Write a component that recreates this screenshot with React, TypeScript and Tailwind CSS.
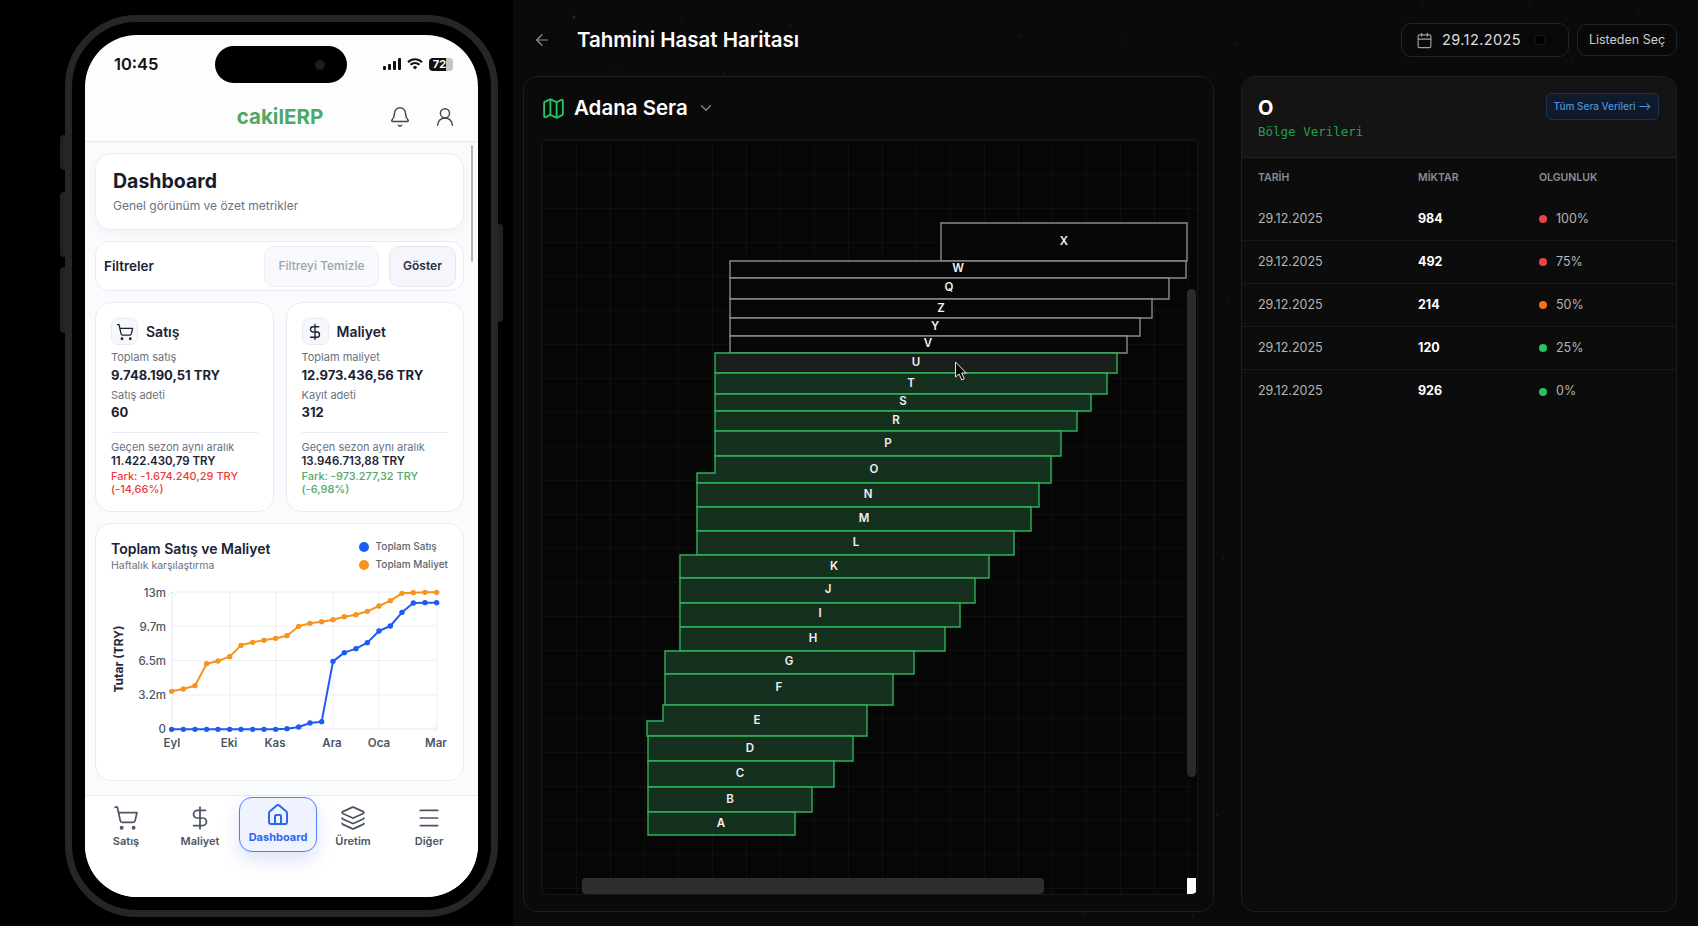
import { ArrowLeft, Bell, Calendar, ChevronDown, DollarSign, House, Layers, Map as MapIcon, Menu, ShoppingCart, UserRound } from "lucide-react";

// harvest zones, drawn top to bottom so the lower ones overlap the upper borders
type Zone = { id: string; pts: string; lx: number; ly: number; kind: "idle" | "hover" | "green" };

const box = (l: number, t: number, r: number, b: number) => `${l},${t} ${r},${t} ${r},${b} ${l},${b}`;

const ZONES: Zone[] = [
	{ id: "X", pts: box(941, 223, 1187, 261), lx: 1064, ly: 241, kind: "idle" },
	{ id: "W", pts: box(730, 261, 1186, 278), lx: 958, ly: 268, kind: "idle" },
	{ id: "Q", pts: box(730, 278, 1169, 299), lx: 949, ly: 287, kind: "idle" },
	{ id: "Z", pts: box(730, 299, 1152, 318), lx: 941, ly: 308, kind: "idle" },
	{ id: "Y", pts: box(730, 318, 1140, 336), lx: 935, ly: 326, kind: "idle" },
	{ id: "V", pts: box(730, 336, 1127, 353), lx: 928, ly: 343, kind: "idle" },
	{ id: "U", pts: box(715, 353, 1117, 373), lx: 916, ly: 362, kind: "hover" },
	{ id: "T", pts: box(715, 373, 1107, 394), lx: 911, ly: 383, kind: "green" },
	{ id: "S", pts: box(715, 394, 1091, 411), lx: 903, ly: 401, kind: "green" },
	{ id: "R", pts: box(715, 411, 1077, 431), lx: 896, ly: 420, kind: "green" },
	{ id: "P", pts: box(715, 431, 1061, 456), lx: 888, ly: 443, kind: "green" },
	{ id: "O", pts: "715,456 1051,456 1051,483 697,483 697,473 715,473", lx: 874, ly: 469, kind: "green" },
	{ id: "N", pts: box(697, 483, 1039, 507), lx: 868, ly: 494, kind: "green" },
	{ id: "M", pts: box(697, 507, 1031, 531), lx: 864, ly: 518, kind: "green" },
	{ id: "L", pts: box(697, 531, 1014, 555), lx: 856, ly: 542, kind: "green" },
	{ id: "K", pts: box(680, 555, 989, 578), lx: 834, ly: 566, kind: "green" },
	{ id: "J", pts: box(680, 578, 975, 603), lx: 828, ly: 589, kind: "green" },
	{ id: "I", pts: box(680, 603, 960, 627), lx: 820, ly: 613, kind: "green" },
	{ id: "H", pts: box(680, 627, 945, 651), lx: 813, ly: 638, kind: "green" },
	{ id: "G", pts: box(665, 651, 914, 674), lx: 789, ly: 661, kind: "green" },
	{ id: "F", pts: box(665, 674, 893, 705), lx: 779, ly: 687, kind: "green" },
	{ id: "E", pts: "663,705 867,705 867,736 647,736 647,721 663,721", lx: 757, ly: 720, kind: "green" },
	{ id: "D", pts: box(648, 736, 853, 761), lx: 750, ly: 748, kind: "green" },
	{ id: "C", pts: box(648, 761, 834, 787), lx: 740, ly: 773, kind: "green" },
	{ id: "B", pts: box(648, 787, 812, 812), lx: 730, ly: 799, kind: "green" },
	{ id: "A", pts: box(648, 812, 795, 835), lx: 721, ly: 823, kind: "green" },
];

const ROWS = [
	{ qty: "984", pct: "100%", dot: "bg-[#ef4444]" },
	{ qty: "492", pct: "75%", dot: "bg-[#ef4444]" },
	{ qty: "214", pct: "50%", dot: "bg-[#f97316]" },
	{ qty: "120", pct: "25%", dot: "bg-[#22c55e]" },
	{ qty: "926", pct: "0%", dot: "bg-[#22c55e]" },
];

const CHART_X = [275, 310, 345, 380, 414, 449, 483, 518, 552, 587, 621, 656, 690, 725, 759, 793, 828, 862, 897, 931, 966, 1000, 1035, 1070];
const COST_Y = [514, 507, 497, 431, 423, 410, 376, 367, 361, 355, 347, 319, 310, 305, 299, 290, 284, 274, 258, 242, 220, 218, 217, 217];
const SALES_Y = [628, 628, 628, 628, 628, 628, 628, 628, 628, 628, 626, 621, 609, 605, 424, 398, 386, 368, 333, 318, 277, 249, 248, 248];

const px = (v: number) => 80 + v / 3;
const py = (v: number) => 520 + v / 3;

// faint dust in the page background
const STARS = Array.from({ length: 150 }, (_, i) => ({
	x: (i * 397 + 61) % 1185,
	y: (i * 223 + 17) % 926,
	r: i % 11 === 0 ? 1.6 : 0.8,
}));

const Series = ({ ys, color }: { ys: number[]; color: string }) => (
	<>
		<polyline
			points={ys.map((y, i) => `${px(CHART_X[i])},${py(y)}`).join(" ")}
			fill="none"
			stroke={color}
			strokeWidth="2"
			strokeLinejoin="round"
		/>
		{ys.map((y, i) => (
			<circle key={i} cx={px(CHART_X[i])} cy={py(y)} r="2.7" fill={color} />
		))}
	</>
);

const Chart = () => (
	<svg width="367" height="190" viewBox="96 580 367 190" className="block">
		{[592, 626, 660.5, 695].map((y) => (
			<line key={y} x1="172" x2="437" y1={y} y2={y} stroke="#eceff8" strokeWidth="1" />
		))}
		{[230, 276, 333, 379, 437].map((x) => (
			<line key={x} x1={x} x2={x} y1="592" y2="729" stroke="#eceff8" strokeWidth="1" />
		))}
		<path d="M172 592V729H437M168 596l4-4 4 4M433 725l4 4-4 4" fill="none" stroke="#e4e8f4" strokeWidth="1" />
		<Series ys={COST_Y} color="#f7931e" />
		<Series ys={SALES_Y} color="#1d5bf5" />
		<g fontFamily="Inter, sans-serif" fontSize="11.5" fontWeight="500" fill="#4b5563">
			{[
				["13m", 597],
				["9.7m", 631],
				["6.5m", 665],
				["3.2m", 699],
				["0", 733],
			].map(([t, y]) => (
				<text key={t} x="166" y={y} textAnchor="end">
					{t}
				</text>
			))}
			{[
				["Eyl", 172],
				["Eki", 229],
				["Kas", 275],
				["Ara", 332],
				["Oca", 379],
				["Mar", 436],
			].map(([t, x]) => (
				<text key={t} x={x} y="747" textAnchor="middle" fontWeight="600">
					{t}
				</text>
			))}
		</g>
		<text
			x="120"
			y="659"
			transform="rotate(-90 120 659)"
			textAnchor="middle"
			dominantBaseline="middle"
			fontFamily="Inter, sans-serif"
			fontSize="12"
			fontWeight="700"
			fill="#1f2937"
		>
			Tutar (TRY)
		</text>
	</svg>
);

const StatCard = ({ icon, title, l1, v1, l2, v2, prev, diff, diffColor }: any) => (
	<div className="h-[210px] flex-1 rounded-[16px] border border-[#e9ebf3] bg-white pl-[15px] pt-[15px]">
		<div className="flex items-center gap-[8px]">
			<div className="flex h-[27px] w-[27px] items-center justify-center rounded-[7px] border border-[#e8ebf3] bg-[#f7f8fc] text-[#1b2233]">
				{icon}
			</div>
			<span className="text-[14px] font-semibold leading-[27px] text-[#1b2233]">{title}</span>
		</div>
		<p className="mt-[5px] text-[11px] leading-[14px] text-[#6b7280]">{l1}</p>
		<p className="mt-[2px] text-[13px] font-bold leading-[18px] text-[#1b2233]">{v1}</p>
		<p className="mt-[4px] text-[11px] leading-[14px] text-[#6b7280]">{l2}</p>
		<p className="mt-[1px] text-[13px] font-bold leading-[18px] text-[#1b2233]">{v2}</p>
		<div className="mr-[15px] mt-[11px] h-px bg-[#e8ebf3]" />
		<p className="mt-[7px] text-[11px] leading-[14px] text-[#6b7280]">Geçen sezon aynı aralık</p>
		<p className="text-[11.5px] font-semibold leading-[15px] text-[#1b2233]">{prev}</p>
		<p className={`mt-[1px] pr-[10px] text-[11px] font-medium leading-[13px] ${diffColor}`}>{diff}</p>
	</div>
);

const NavItem = ({ icon, label, className }: any) => (
	<div className={`flex w-[70px] flex-col items-center text-[#4b5563] ${className ?? ""}`}>
		{icon}
		<span className="mt-[3px] text-[11px] font-semibold leading-[14px]">{label}</span>
	</div>
);

const Phone = () => (
	<div className="relative ml-[65px] h-[902px] w-[433px] rounded-[72px] border-[7px] border-[#262626] bg-black p-[13px]">
		<div className="absolute left-[-12px] top-[113px] h-[35px] w-[5px] rounded-l bg-[#222222]" />
		<div className="absolute left-[-12px] top-[170px] h-[65px] w-[5px] rounded-l bg-[#222222]" />
		<div className="absolute left-[-12px] top-[245px] h-[66px] w-[5px] rounded-l bg-[#222222]" />
		<div className="absolute right-[-12px] top-[202px] h-[98px] w-[5px] rounded-r bg-[#222222]" />

		<div className="relative flex h-full flex-col overflow-hidden rounded-[52px] bg-[#fdfdfe]">
			<div className="absolute left-[130px] top-[11px] flex h-[37px] w-[132px] items-center justify-end rounded-full bg-black pr-[22px]">
				<div className="h-[10px] w-[10px] rounded-full bg-[#1c1c1e]" />
			</div>

			<div className="flex h-[58px] shrink-0 items-center justify-between pl-[29px] pr-[25px]">
				<span className="text-[16.5px] font-semibold text-[#111111]">10:45</span>
				<div className="flex items-center gap-[6px]">
					<svg width="18" height="12" viewBox="0 0 18 12" fill="#111111">
						<rect x="0" y="8" width="3" height="4" rx="1" />
						<rect x="5" y="6" width="3" height="6" rx="1" />
						<rect x="10" y="3" width="3" height="9" rx="1" />
						<rect x="15" y="0" width="3" height="12" rx="1" />
					</svg>
					<svg width="16" height="12" viewBox="0 0 16 12" fill="none" stroke="#111111" strokeWidth="2">
						<path d="M1 4.2a10 10 0 0 1 14 0M3.5 6.8a6.4 6.4 0 0 1 9 0" />
						<path d="M8 11.6 5.8 9.2a3 3 0 0 1 4.4 0z" fill="#111111" stroke="none" />
					</svg>
					<div className="flex h-[13px] w-[24px] items-center justify-center rounded-[4px] bg-[linear-gradient(90deg,#111111_72%,#c4c4c4_72%)] pr-[3px] text-[11px] font-bold leading-none text-white">
						72
					</div>
				</div>
			</div>

			<div className="grid h-[49px] shrink-0 grid-cols-[1fr_auto_1fr] items-center border-b border-[#e6e8f2]">
				<div />
				<span className="mr-[3px] text-[20.5px] font-bold text-[#4ea866]">cakilERP</span>
				<div className="flex justify-end gap-[23px] pr-[22px] text-[#3f4654]">
					<Bell size={22} strokeWidth={1.6} />
					<UserRound size={22} strokeWidth={1.6} />
				</div>
			</div>

			<div className="relative flex h-[653px] shrink-0 flex-col gap-[11px] bg-[#fafbfd] pl-[10px] pr-[14px] pt-[11px]">
				<div className="absolute right-[5px] top-[3px] h-[117px] w-[2px] rounded-full bg-[#b5b5b8]" />
				<div className="h-[77px] rounded-[16px] border border-[#e9ebf3] bg-white pl-[17px] pt-[14px] shadow-[0_4px_10px_rgba(30,40,80,0.04)]">
					<p className="text-[19.5px] font-bold leading-[27px] text-[#161c30]">Dashboard</p>
					<p className="mt-[3px] text-[12px] leading-[16px] text-[#6b7280]">Genel görünüm ve özet metrikler</p>
				</div>
				<div className="flex h-[50px] items-center justify-between rounded-[14px] border border-[#e9ebf3] bg-white pl-[8px] pr-[7px]">
					<span className="text-[13.5px] font-semibold text-[#1b2233]">Filtreler</span>
					<div className="flex gap-[10px]">
						<div className="flex h-[41px] w-[115px] items-center justify-center rounded-[10px] border border-[#eceef5] bg-[#f8f9fc] text-[12px] font-medium text-[#9ca3af]">
							Filtreyi Temizle
						</div>
						<div className="flex h-[41px] w-[67px] items-center justify-center rounded-[10px] border border-[#e4e7f0] bg-[#f4f6fb] text-[12px] font-semibold text-[#2a3040]">
							Göster
						</div>
					</div>
				</div>
				<div className="flex gap-[12px]">
					<StatCard
						icon={<ShoppingCart size={18} strokeWidth={1.7} />}
						title="Satış"
						l1="Toplam satış"
						v1="9.748.190,51 TRY"
						l2="Satış adeti"
						v2="60"
						prev="11.422.430,79 TRY"
						diff="Fark: -1.674.240,29 TRY (-14,66%)"
						diffColor="text-[#ef3b3b]"
					/>
					<StatCard
						icon={<DollarSign size={18} strokeWidth={1.8} />}
						title="Maliyet"
						l1="Toplam maliyet"
						v1="12.973.436,56 TRY"
						l2="Kayıt adeti"
						v2="312"
						prev="13.946.713,88 TRY"
						diff="Fark: -973.277,32 TRY (-6,98%)"
						diffColor="text-[#4ea866]"
					/>
				</div>
				<div className="h-[258px] rounded-[16px] border border-[#e9ebf3] bg-white">
					<div className="flex h-[56px] items-start justify-between pl-[15px] pr-[15px] pt-[16px]">
						<div>
							<p className="text-[14px] font-semibold leading-[18px] text-[#1b2233]">Toplam Satış ve Maliyet</p>
							<p className="mt-[1px] text-[10.5px] leading-[14px] text-[#6b7280]">Haftalık karşılaştırma</p>
						</div>
						<div className="flex flex-col gap-[5px] text-[10px] font-medium leading-[13px] text-[#5b6472]">
							<div className="flex items-center gap-[7px]">
								<span className="h-[10px] w-[10px] rounded-full bg-[#1d5bf5]" />
								Toplam Satış
							</div>
							<div className="flex items-center gap-[7px]">
								<span className="h-[10px] w-[10px] rounded-full bg-[#f7931e]" />
								Toplam Maliyet
							</div>
						</div>
					</div>
					<Chart />
				</div>
			</div>

			<div className="flex flex-1 items-start border-t border-[#e8eaf2] bg-white pl-[6px] pt-[9px]">
				<NavItem icon={<ShoppingCart size={26} strokeWidth={1.6} />} label="Satış" />
				<NavItem className="ml-[4px]" icon={<DollarSign size={26} strokeWidth={1.6} />} label="Maliyet" />
				<div className="ml-[4px] mt-[-8px] flex h-[55px] w-[78px] flex-col items-center rounded-[13px] border-[1.5px] border-[#4f7ef8] bg-[#eef3ff] pt-[5px] text-[#2f66f0] shadow-[0_8px_18px_rgba(60,100,230,0.18)]">
					<House size={24} strokeWidth={2} />
					<span className="mt-[3px] text-[11px] font-bold leading-[14px]">Dashboard</span>
				</div>
				<NavItem className="ml-[1px]" icon={<Layers size={26} strokeWidth={1.6} />} label="Üretim" />
				<NavItem className="ml-[6px]" icon={<Menu size={26} strokeWidth={1.6} />} label="Diğer" />
			</div>
		</div>
	</div>
);

const HarvestMap = () => (
	<div className="relative ml-[17px] mr-[15px] h-[756px] overflow-hidden rounded-[6px] border border-[#151515] bg-[#060606] bg-[linear-gradient(#0d100d_1px,transparent_1px),linear-gradient(90deg,#0d100d_1px,transparent_1px)] bg-[length:34px_34px]">
		<svg width="656" height="754" viewBox="542 140 656 754" className="absolute left-0 top-0">
			{ZONES.map((z) => (
				<polygon
					key={z.id}
					points={z.pts}
					fill={z.kind === "idle" ? "#070707" : z.kind === "hover" ? "#1a1f1c" : "#16301f"}
					stroke={z.kind === "idle" ? "#8b8b8b" : "#2fb35a"}
					strokeWidth="1.4"
				/>
			))}
			{ZONES.map((z) => (
				<text
					key={z.id}
					x={z.lx}
					y={z.ly}
					textAnchor="middle"
					dominantBaseline="central"
					fontFamily="Inter, sans-serif"
					fontSize="11.5"
					fontWeight="600"
					fill="#f1f1f1"
				>
					{z.id}
				</text>
			))}
			<path d="M955.5 362v15l3.6-3 2.6 6 2.6-1.2-2.6-5.8h4.6z" fill="#0a0a0a" stroke="#e6e6e6" strokeWidth="1" />
		</svg>
		<div className="absolute right-[1px] top-[149px] h-[488px] w-[9px] rounded-full bg-[#2b2b2b]" />
		<div className="absolute bottom-0 left-[40px] h-[16px] w-[462px] rounded-[4px] bg-[#2e2e2e]" />
		<div className="absolute bottom-0 right-[1px] h-[16px] w-[9px] bg-white" />
	</div>
);

const SidePanel = () => (
	<div className="h-[836px] w-[436px] overflow-hidden rounded-[14px] border border-[#1e1e1e] bg-[#0c0c0c]">
		<div className="flex h-[81px] items-start justify-between border-b border-[#212121] bg-[#141414] pl-[16px] pr-[17px]">
			<div className="pt-[19px]">
				<p className="text-[20px] font-bold leading-[24px] text-white">O</p>
				<p className="mt-[2px] font-['DejaVu_Sans_Mono',monospace] text-[12.5px] leading-[20px] text-[#22a04e]">Bölge Verileri</p>
			</div>
			<div className="mt-[16px] flex h-[27px] w-[113px] items-center justify-center rounded-[6px] border border-[#1d3352] bg-[#0f1a2b] text-[10px] font-medium text-[#4f8fd8]">
				Tüm Sera Verileri ⟶
			</div>
		</div>
		<div className="grid h-[40px] grid-cols-[160px_121px_1fr] items-center px-[16px] text-[10.5px] font-semibold text-[#8a8f98]">
			<span>TARİH</span>
			<span>MİKTAR</span>
			<span>OLGUNLUK</span>
		</div>
		{ROWS.map((r, i) => (
			<div
				key={r.qty}
				className={`grid h-[43px] grid-cols-[160px_121px_1fr] items-center px-[16px] text-[12.5px] ${i < 4 ? "border-b border-[#191919]" : ""}`}
			>
				<span className="text-[#b5b5b5]">29.12.2025</span>
				<span className="font-bold text-white">{r.qty}</span>
				<span className="flex items-center gap-[9px] text-[#b5b5b5]">
					<span className={`h-[8px] w-[8px] rounded-full ${r.dot}`} />
					{r.pct}
				</span>
			</div>
		))}
	</div>
);

export default function App() {
	return (
		<div className="flex h-[926px] w-[1698px] overflow-hidden bg-black font-['Inter',sans-serif]">
			<div className="w-[513px] shrink-0 pt-[15px]">
				<Phone />
			</div>

			<div className="relative flex-1 bg-[#0a0a0a] pl-[10px] pr-[21px]">
				<svg width="1185" height="926" className="absolute left-0 top-0">
					{STARS.map((s, i) => (
						<circle key={i} cx={s.x} cy={s.y} r={s.r} fill="#2a2a2a" />
					))}
				</svg>
				<div className="relative flex h-[76px] items-center justify-between pt-[4px]">
					<div className="flex items-center gap-[26px] pl-[10px]">
						<ArrowLeft size={18} strokeWidth={1.6} className="text-[#8b93a5]" />
						<h1 className="text-[20.5px] font-semibold text-white">Tahmini Hasat Haritası</h1>
					</div>
					<div className="flex items-center gap-[8px]">
						<div className="flex h-[34px] w-[168px] items-center rounded-[10px] border border-[#232323] bg-[#090909] pl-[14px]">
							<Calendar size={17} strokeWidth={1.6} className="text-[#9aa1ad]" />
							<span className="ml-[9px] text-[14.5px] tracking-[0.4px] text-[#dddddd]">29.12.2025</span>
							<div className="ml-[14px] h-[10px] w-[10px] rounded-[2px] border border-[#141414] bg-black" />
						</div>
						<div className="flex h-[32px] w-[100px] items-center justify-center rounded-[10px] border border-[#232323] bg-[#090909] text-[12.5px] text-[#cccccc]">
							Listeden Seç
						</div>
					</div>
				</div>

				<div className="relative flex gap-[27px]">
					<div className="h-[836px] w-[691px] rounded-[14px] border border-[#1e1e1e] bg-[#0a0a0a]">
						<div className="flex h-[62px] items-center pl-[17px]">
							<MapIcon size={25} strokeWidth={1.8} className="text-[#22c55e]" />
							<span className="ml-[8px] text-[20.5px] font-semibold text-white">Adana Sera</span>
							<ChevronDown size={18} strokeWidth={1.6} className="ml-[9px] text-[#8a8a8a]" />
						</div>
						<HarvestMap />
					</div>
					<SidePanel />
				</div>
			</div>
		</div>
	);
}
